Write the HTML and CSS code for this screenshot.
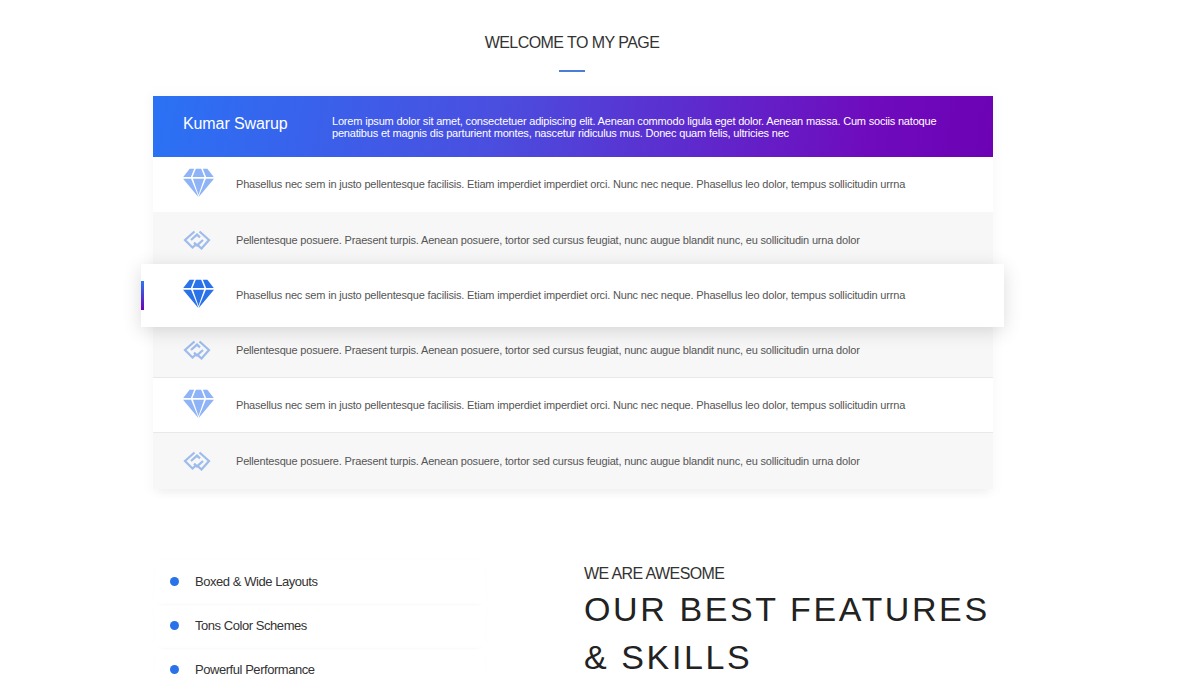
FILE: index.html
```html
<!DOCTYPE html>
<html lang="en">
<head>
<meta charset="utf-8">
<title>Welcome to my page</title>
<link rel="stylesheet" href="styles.css">
</head>
<body>
<svg class="defs" width="0" height="0" aria-hidden="true">
  <symbol id="gem" viewBox="0 0 32 28">
    <path d="M7.4 0.6h4.4l-3.2 8H1.2zM13.4 0.6h5.2l3.2 8H10.2zM20.2 0.6h4.4l6.2 8h-7.4zM1 10.4h7.8l6 14.4L15.8 28zM10.6 10.4h10.8L16 26zM23.2 10.4H31L16.2 28l1-3.2z"/>
  </symbol>
  <symbol id="link" viewBox="0 0 28 20">
    <path d="M11.5 1.5 L2 10 L9.5 17.5 L13 14.4 M8 10 L14 4.6 L17 7.4 M16.5 1.5 L26 10 L18.5 18.5 L15 15.4 M20 10 L14 15.4 L11 12.6"/>
  </symbol>
</svg>
<main class="page">
  <section class="welcome">
    <h2 class="welcome-title">WELCOME TO MY PAGE</h2>
    <div class="title-rule"></div>
    <div class="table">
      <div class="table-head">
        <div class="head-name">Kumar Swarup</div>
        <p class="head-text">Lorem ipsum dolor sit amet, consectetuer adipiscing elit. Aenean commodo ligula eget dolor. Aenean massa. Cum sociis natoque penatibus et magnis dis parturient montes, nascetur ridiculus mus. Donec quam felis, ultricies nec</p>
      </div>
      <div class="row row-plain">
        <svg class="ico ico-gem"><use href="#gem"/></svg>
        <p class="row-text">Phasellus nec sem in justo pellentesque facilisis. Etiam imperdiet imperdiet orci. Nunc nec neque. Phasellus leo dolor, tempus sollicitudin urrna</p>
      </div>
      <div class="row row-alt">
        <svg class="ico ico-link"><use href="#link"/></svg>
        <p class="row-text">Pellentesque posuere. Praesent turpis. Aenean posuere, tortor sed cursus feugiat, nunc augue blandit nunc, eu sollicitudin urna dolor</p>
      </div>
      <div class="row row-active">
        <svg class="ico ico-gem"><use href="#gem"/></svg>
        <p class="row-text">Phasellus nec sem in justo pellentesque facilisis. Etiam imperdiet imperdiet orci. Nunc nec neque. Phasellus leo dolor, tempus sollicitudin urrna</p>
      </div>
      <div class="row row-alt">
        <svg class="ico ico-link"><use href="#link"/></svg>
        <p class="row-text">Pellentesque posuere. Praesent turpis. Aenean posuere, tortor sed cursus feugiat, nunc augue blandit nunc, eu sollicitudin urna dolor</p>
      </div>
      <div class="row">
        <svg class="ico ico-gem"><use href="#gem"/></svg>
        <p class="row-text">Phasellus nec sem in justo pellentesque facilisis. Etiam imperdiet imperdiet orci. Nunc nec neque. Phasellus leo dolor, tempus sollicitudin urrna</p>
      </div>
      <div class="row row-alt">
        <svg class="ico ico-link"><use href="#link"/></svg>
        <p class="row-text">Pellentesque posuere. Praesent turpis. Aenean posuere, tortor sed cursus feugiat, nunc augue blandit nunc, eu sollicitudin urna dolor</p>
      </div>
    </div>
  </section>
  <section class="features">
    <ul class="feature-list">
      <li class="feature-item"><span class="dot"></span>Boxed &amp; Wide Layouts</li>
      <li class="feature-item"><span class="dot"></span>Tons Color Schemes</li>
      <li class="feature-item"><span class="dot"></span>Powerful Performance</li>
    </ul>
    <div class="feature-copy">
      <h3 class="feature-kicker">WE ARE AWESOME</h3>
      <h2 class="feature-title"><span class="title-line">OUR BEST FEATURES</span><span class="title-line">&amp; SKILLS</span></h2>
    </div>
  </section>
</main>
</body>
</html>
```
FILE: styles.css
```css
html, body {
  margin: 0;
  height: 675px;
  overflow: hidden;
  background: #fff;
}
body {
  font-family: "Liberation Sans", Arial, sans-serif;
  color: #333;
}
.defs { position: absolute; }
.page {
  width: 840px;
  margin-left: 153px;
}
.welcome {
  padding-top: 34px;
}
.welcome-title {
  margin: 0;
  padding-right: 2px;
  font-size: 16px;
  line-height: 18px;
  font-weight: 400;
  letter-spacing: -0.55px;
  color: #333;
  text-align: center;
}
.title-rule {
  width: 26px;
  height: 2px;
  margin: 18px 0 24px 406px;
  background: #4a7fd6;
}
.table {
  position: relative;
  box-shadow: 0 0 10px 4px rgba(0, 0, 0, 0.025), 0 10px 8px -5px rgba(0, 0, 0, 0.04);
}
.table-head {
  display: flex;
  align-items: center;
  height: 61px;
  padding-left: 30px;
  background: linear-gradient(100deg, #2a72f5 0%, #4a4fe0 40%, #6f0bbd 85%, #6c02b4 100%);
  color: #fff;
}
.head-name {
  flex: 0 0 149px;
  font-size: 16px;
  letter-spacing: -0.1px;
  margin-top: -5px;
}
.head-text {
  margin: 0;
  width: 640px;
  font-size: 11px;
  line-height: 12px;
  letter-spacing: -0.185px;
}
.row {
  position: relative;
  display: flex;
  align-items: center;
  box-sizing: border-box;
  height: 55.3px;
  padding-left: 30px;
  background: #fff;
  border-bottom: 1px solid #e9e9e9;
}
.row-plain {
  border-bottom: 0;
  padding-bottom: 1px;
}
.row-alt {
  background: #f7f7f7;
  border-bottom: 1px solid #e8e8e8;
}
.row-plain + .row-alt {
  padding-top: 1px;
}
.row-alt:last-child {
  border-bottom: 0;
}
.row-active {
  z-index: 2;
  border-bottom: 0;
}
.row-active::before {
  content: "";
  position: absolute;
  inset: -4px -11px -4px -12px;
  background: #fff;
  box-shadow: 0 4px 18px rgba(0, 0, 0, 0.14);
  z-index: -1;
}
.row-active::after {
  content: "";
  position: absolute;
  left: -12px;
  top: 13px;
  width: 2.5px;
  height: 29px;
  background: linear-gradient(180deg, #2a78f5, #6c02b4);
}
.ico {
  flex: none;
  display: block;
}
.ico-gem {
  width: 33px;
  height: 29px;
  margin: 0 21px 3px -1px;
  fill: #8fb3f7;
}
.row-active .ico-gem {
  fill: #2a72e8;
}
.ico-link {
  width: 28px;
  height: 20px;
  margin: 0 25px 0 0;
  fill: none;
  stroke: #9dbcec;
  stroke-width: 2.2;
}
.row-text {
  margin: 0;
  font-size: 11px;
  line-height: 14px;
  letter-spacing: -0.18px;
  color: #555;
  white-space: nowrap;
}
.features {
  display: flex;
  margin-top: 71px;
}
.feature-list {
  flex: none;
  list-style: none;
  margin: 0;
  padding: 0;
  width: 431px;
}
.feature-item {
  display: flex;
  align-items: center;
  width: 330px;
  height: 44px;
  margin-left: 2px;
  font-size: 13px;
  letter-spacing: -0.45px;
  color: #333;
  border-radius: 8px;
  box-shadow: 0 4px 3px -3px rgba(0, 0, 0, 0.018), 0 0 8px rgba(0, 0, 0, 0.012);
}
.dot {
  width: 9px;
  height: 9px;
  margin: 0 16px 0 15px;
  border-radius: 50%;
  background: #2a72e8;
}
.feature-copy {
  flex: none;
  padding-top: 5px;
}
.feature-kicker {
  margin: 0;
  font-size: 16px;
  line-height: 18px;
  font-weight: 400;
  letter-spacing: -0.6px;
  color: #333;
}
.feature-title {
  display: flex;
  flex-direction: column;
  gap: 12px;
  margin: 8px 0 0;
  font-size: 34px;
  font-weight: 400;
  letter-spacing: 2.6px;
  color: #222;
  white-space: nowrap;
}
.title-line {
  display: block;
  line-height: 36px;
}
```
